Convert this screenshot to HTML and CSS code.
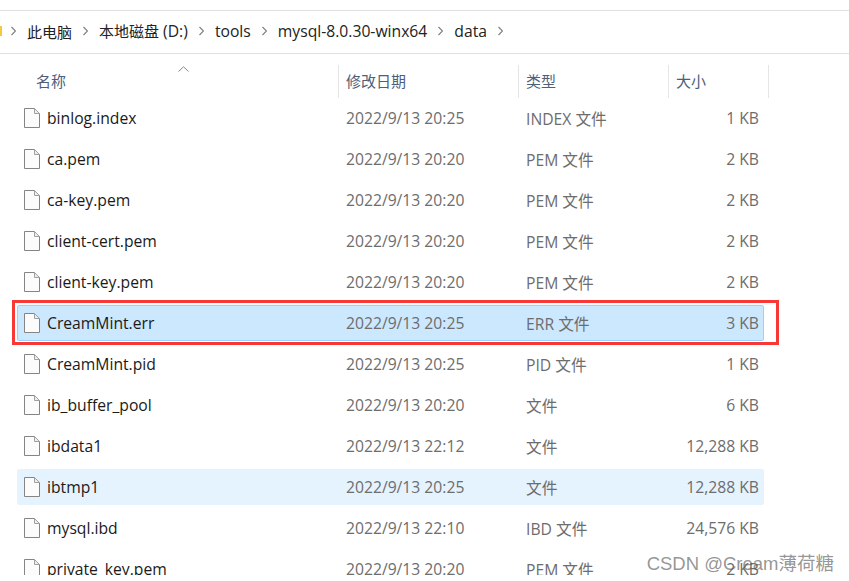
FILE: index.html
```html
<!DOCTYPE html>
<html lang="en">
  <head>
    <meta charset="UTF-8" />
    <meta name="viewport" content="width=device-width, initial-scale=1.0" />
    <title>data</title>
    <link rel="stylesheet" href="styles.css">
  </head>
  <body>
    <div class="explorer">
      <!-- Address bar -->
      <div class="address-bar">
        <span class="folder-edge"></span>
        <svg class="chevron" viewBox="0 0 5 10"><path d="M.5 1l4 4-4 4"/></svg>
        <span class="crumb-cjk">此电脑</span>
        <svg class="chevron" viewBox="0 0 5 10"><path d="M.5 1l4 4-4 4"/></svg>
        <span><span class="crumb-cjk">本地磁盘</span> (D:)</span>
        <svg class="chevron" viewBox="0 0 5 10"><path d="M.5 1l4 4-4 4"/></svg>
        <span>tools</span>
        <svg class="chevron" viewBox="0 0 5 10"><path d="M.5 1l4 4-4 4"/></svg>
        <span>mysql-8.0.30-winx64</span>
        <svg class="chevron" viewBox="0 0 5 10"><path d="M.5 1l4 4-4 4"/></svg>
        <span>data</span>
        <svg class="chevron" viewBox="0 0 5 10"><path d="M.5 1l4 4-4 4"/></svg>
      </div>

      <!-- Column headers -->
      <div class="list-head">
        <div class="col-name">
          <svg class="sort-arrow" viewBox="0 0 11 6"><path d="M.5 5.500L5.500 .8 10.500 5.500"/></svg>
          名称
        </div>
        <div class="col-head">修改日期</div>
        <div class="col-head">类型</div>
        <div class="col-head col-last">大小</div>
      </div>

      <!-- Files -->
      <div class="rows">
        <div class="row">
          <svg class="file-icon" viewBox="0 0 16 20"><path class="page" d="M.5.5h10l5 5v14H.5z"/><path class="fold" d="M10.500.5v5h5z"/></svg>
          <span class="name">binlog.index</span><span>2022/9/13 20:25</span><span>INDEX 文件</span><span class="size">1 KB</span>
        </div>
        <div class="row">
          <svg class="file-icon" viewBox="0 0 16 20"><path class="page" d="M.5.5h10l5 5v14H.5z"/><path class="fold" d="M10.500.5v5h5z"/></svg>
          <span class="name">ca.pem</span><span>2022/9/13 20:20</span><span>PEM 文件</span><span class="size">2 KB</span>
        </div>
        <div class="row">
          <svg class="file-icon" viewBox="0 0 16 20"><path class="page" d="M.5.5h10l5 5v14H.5z"/><path class="fold" d="M10.500.5v5h5z"/></svg>
          <span class="name">ca-key.pem</span><span>2022/9/13 20:20</span><span>PEM 文件</span><span class="size">2 KB</span>
        </div>
        <div class="row">
          <svg class="file-icon" viewBox="0 0 16 20"><path class="page" d="M.5.5h10l5 5v14H.5z"/><path class="fold" d="M10.500.5v5h5z"/></svg>
          <span class="name">client-cert.pem</span><span>2022/9/13 20:20</span><span>PEM 文件</span><span class="size">2 KB</span>
        </div>
        <div class="row">
          <svg class="file-icon" viewBox="0 0 16 20"><path class="page" d="M.5.5h10l5 5v14H.5z"/><path class="fold" d="M10.500.5v5h5z"/></svg>
          <span class="name">client-key.pem</span><span>2022/9/13 20:20</span><span>PEM 文件</span><span class="size">2 KB</span>
        </div>
        <div class="row selected">
          <svg class="file-icon" viewBox="0 0 16 20"><path class="page" d="M.5.5h10l5 5v14H.5z"/><path class="fold" d="M10.500.5v5h5z"/></svg>
          <span class="name">CreamMint.err</span><span>2022/9/13 20:25</span><span>ERR 文件</span><span class="size">3 KB</span>
          <div class="red-box"></div>
        </div>
        <div class="row">
          <svg class="file-icon" viewBox="0 0 16 20"><path class="page" d="M.5.5h10l5 5v14H.5z"/><path class="fold" d="M10.500.5v5h5z"/></svg>
          <span class="name">CreamMint.pid</span><span>2022/9/13 20:25</span><span>PID 文件</span><span class="size">1 KB</span>
        </div>
        <div class="row">
          <svg class="file-icon" viewBox="0 0 16 20"><path class="page" d="M.5.5h10l5 5v14H.5z"/><path class="fold" d="M10.500.5v5h5z"/></svg>
          <span class="name">ib_buffer_pool</span><span>2022/9/13 20:20</span><span>文件</span><span class="size">6 KB</span>
        </div>
        <div class="row">
          <svg class="file-icon" viewBox="0 0 16 20"><path class="page" d="M.5.5h10l5 5v14H.5z"/><path class="fold" d="M10.500.5v5h5z"/></svg>
          <span class="name">ibdata1</span><span>2022/9/13 22:12</span><span>文件</span><span class="size">12,288 KB</span>
        </div>
        <div class="row hovered">
          <svg class="file-icon" viewBox="0 0 16 20"><path class="page" d="M.5.5h10l5 5v14H.5z"/><path class="fold" d="M10.500.5v5h5z"/></svg>
          <span class="name">ibtmp1</span><span>2022/9/13 20:25</span><span>文件</span><span class="size">12,288 KB</span>
        </div>
        <div class="row">
          <svg class="file-icon" viewBox="0 0 16 20"><path class="page" d="M.5.5h10l5 5v14H.5z"/><path class="fold" d="M10.500.5v5h5z"/></svg>
          <span class="name">mysql.ibd</span><span>2022/9/13 22:10</span><span>IBD 文件</span><span class="size">24,576 KB</span>
        </div>
        <div class="row">
          <svg class="file-icon" viewBox="0 0 16 20"><path class="page" d="M.5.5h10l5 5v14H.5z"/><path class="fold" d="M10.500.5v5h5z"/></svg>
          <span class="name">private_key.pem</span><span>2022/9/13 20:20</span><span>PEM 文件</span><span class="size">2 KB</span>
        </div>
      </div>
      <div class="watermark">CSDN @Cream薄荷糖</div>
    </div>
  </body>
</html>
```

FILE: styles.css
```css
* {
  margin: 0;
  padding: 0;
  box-sizing: border-box;
  font-family: "Open Sans", "Noto Sans CJK SC", sans-serif;
}

html,
body {
  background: white;
  overflow: hidden;
}

.explorer {
  position: relative;
  height: 575px;
  overflow: hidden;
  padding-top: 10px;
}

.address-bar {
  display: flex;
  align-items: center;
  height: 44px;
  padding-bottom: 2px;
  border-top: 1px solid #e0e0e0;
  border-bottom: 1px solid #e0e0e0;
  font-size: 15.7px;
  color: #222;
  gap: 11px;
}

.crumb-cjk {
  font-size: 15px;
}

.folder-edge {
  width: 2px;
  height: 10px;
  margin-right: -2px;
  background: #f5c842;
}

.chevron {
  width: 5px;
  height: 10px;
}

.chevron path {
  fill: none;
  stroke: #808080;
  stroke-width: 1.2;
}

.list-head {
  display: grid;
  grid-template-columns: 321px 180px 150px 101px;
  margin: 11px 0 0 17px;
  height: 33px;
  width: 752px;
  font-size: 15px;
  color: #4c607a;
}

.col-name {
  position: relative;
  padding-left: 19px;
  line-height: 32px;
}

.sort-arrow {
  position: absolute;
  left: 161px;
  top: 1px;
  width: 11px;
  height: 6px;
}

.sort-arrow path {
  fill: none;
  stroke: #8a8a8a;
}

.col-head {
  border-left: 1px solid #e5e5e5;
  padding-left: 7px;
  line-height: 32px;
}

.col-last {
  border-right: 1px solid #e5e5e5;
}

.rows {
  display: flex;
  flex-direction: column;
  gap: 5px;
  margin: 2px 0 0 17px;
  width: 747px;
}

.row {
  position: relative;
  flex: none;
  display: grid;
  grid-template-columns: 23px 299px 180px 142px 91px;
  align-items: center;
  height: 36px;
  padding-left: 7px;
  font-size: 15.7px;
  color: #6d6d6d;
}

.file-icon {
  width: 16px;
  height: 20px;
}

.page {
  fill: #fcfcfc;
  stroke: #858585;
}

.fold {
  fill: #eeeeee;
  stroke: #a0a0a0;
}

.name {
  color: #1a1a1a;
}

.size {
  text-align: right;
}

.selected {
  background: #cce8ff;
  border: 1px solid #99d1ff;
  border-radius: 2px;
  padding-left: 6px;
}

.hovered {
  background: #e5f3ff;
  border-radius: 2px;
}

/* annotation drawn over the selected row */
.red-box {
  position: absolute;
  left: -6px;
  top: -6px;
  width: 767px;
  height: 45px;
  border: 3px solid #f83737;
}

.watermark {
  position: absolute;
  right: 15px;
  top: 549px;
  font-family: "Liberation Sans", "Noto Sans CJK SC", sans-serif;
  font-size: 18.5px;
  color: rgba(90, 90, 90, 0.65);
}
```
